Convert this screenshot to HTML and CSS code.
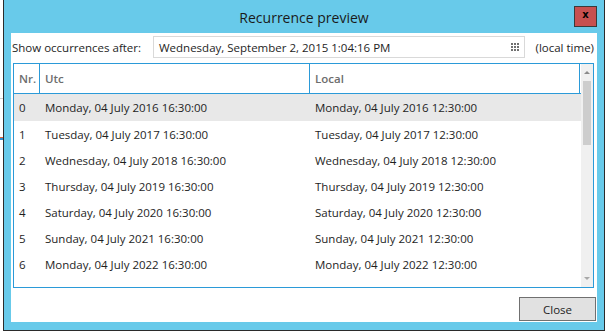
FILE: index.html
```html
<!DOCTYPE html>
<html lang="en">
<head>
  <meta charset="UTF-8">
  <title>Recurrence preview</title>
  <link rel="stylesheet" href="styles.css">
</head>
<body>

<div class="desktop">
  <div class="bg-line bg-line-gray"></div>
  <div class="bg-line bg-line-red"></div>
  <div class="bg-line bg-line-blue"></div>

  <div class="window">
    <div class="titlebar">
      <span class="title">Recurrence preview</span>
      <button type="button" class="close-x">x</button>
    </div>

    <div class="client">
      <div class="filter-row">
        <label class="filter-label" for="afterDate">Show occurrences after:</label>
        <div class="date-box" id="afterDate">
          <span class="date-text">Wednesday, September 2, 2015 1:04:16 PM</span>
          <span class="date-icon">
            <i></i><i></i><i></i><i></i><i></i><i></i><i></i><i></i><i></i>
          </span>
        </div>
        <span class="local-note">(local time)</span>
      </div>

      <div class="grid">
        <div class="grid-main">
          <div class="grid-head">
            <div class="cell col-nr">Nr.</div>
            <div class="cell col-date">Utc</div>
            <div class="cell col-date">Local</div>
          </div>
          <div class="grid-body">
            <div class="grid-row selected">
              <div class="cell col-nr">0</div>
              <div class="cell col-date">Monday, 04 July 2016 16:30:00</div>
              <div class="cell col-date">Monday, 04 July 2016 12:30:00</div>
            </div>
            <div class="grid-row">
              <div class="cell col-nr">1</div>
              <div class="cell col-date">Tuesday, 04 July 2017 16:30:00</div>
              <div class="cell col-date">Tuesday, 04 July 2017 12:30:00</div>
            </div>
            <div class="grid-row">
              <div class="cell col-nr">2</div>
              <div class="cell col-date">Wednesday, 04 July 2018 16:30:00</div>
              <div class="cell col-date">Wednesday, 04 July 2018 12:30:00</div>
            </div>
            <div class="grid-row">
              <div class="cell col-nr">3</div>
              <div class="cell col-date">Thursday, 04 July 2019 16:30:00</div>
              <div class="cell col-date">Thursday, 04 July 2019 12:30:00</div>
            </div>
            <div class="grid-row">
              <div class="cell col-nr">4</div>
              <div class="cell col-date">Saturday, 04 July 2020 16:30:00</div>
              <div class="cell col-date">Saturday, 04 July 2020 12:30:00</div>
            </div>
            <div class="grid-row">
              <div class="cell col-nr">5</div>
              <div class="cell col-date">Sunday, 04 July 2021 16:30:00</div>
              <div class="cell col-date">Sunday, 04 July 2021 12:30:00</div>
            </div>
            <div class="grid-row">
              <div class="cell col-nr">6</div>
              <div class="cell col-date">Monday, 04 July 2022 16:30:00</div>
              <div class="cell col-date">Monday, 04 July 2022 12:30:00</div>
            </div>
          </div>
        </div>
        <div class="scrollbar">
          <div class="scroll-btn"><span class="arrow-up"></span></div>
          <div class="scroll-thumb"></div>
          <div class="scroll-track"></div>
          <div class="scroll-btn"><span class="arrow-down"></span></div>
        </div>
      </div>

      <div class="button-row">
        <button type="button" class="close-button">Close</button>
      </div>
    </div>
  </div>
</div>

</body>
</html>
```
FILE: styles.css
```css
body {
  margin: 0;
  background-color: #ffffff;
  font-family: "Open Sans", "Noto Sans", sans-serif;
  font-size: 11.5px;
  color: #1e1e1e;
}

.desktop {
  position: relative;
  width: 606px;
  height: 333px;
  overflow: hidden;
  padding-left: 3px;
  box-sizing: border-box;
}

/* bits of the windows behind the dialog */
.bg-line {
  position: absolute;
  left: 0;
  width: 3px;
}
.bg-line-gray {
  top: 98px;
  height: 1px;
  background-color: #cfcfcf;
}
.bg-line-red {
  top: 137px;
  height: 1px;
  background-color: #e0603a;
}
.bg-line-blue {
  top: 138px;
  height: 2px;
  background-color: #2a8fd0;
}

.window {
  position: relative;
  width: 602px;
  height: 331px;
  box-sizing: border-box;
  border: 1px solid #2b2b2b;
  border-top: none;
  background-color: #68caea;
  display: flex;
  flex-direction: column;
}

.titlebar {
  height: 33px;
  flex: none;
  display: flex;
  align-items: center;
  justify-content: center;
}

.title {
  font-size: 14px;
  color: #1a1a1a;
  margin-top: 1px;
}

.close-x {
  position: absolute;
  top: 6px;
  right: 7px;
  width: 23px;
  height: 21px;
  padding: 0 0 3px;
  border: 1px solid #3a3a3a;
  background-color: #c75050;
  color: #000000;
  font-family: "DejaVu Sans", sans-serif;
  font-size: 10px;
  font-weight: bold;
  line-height: 1;
}

.client {
  flex: 1;
  margin: 0 7px 8px;
  background-color: #ffffff;
  padding: 3px 3px 0 1px;
  display: flex;
  flex-direction: column;
}

.filter-row {
  display: flex;
  align-items: center;
  height: 22px;
}

.filter-label {
  width: 141px;
  flex: none;
}

.date-box {
  flex: 1;
  height: 22px;
  box-sizing: border-box;
  border: 1px solid #d9d9d9;
  display: flex;
  align-items: center;
  justify-content: space-between;
  padding: 0 5px;
}

.date-icon {
  display: grid;
  grid-template-columns: repeat(3, 2px);
  grid-auto-rows: 2px;
  gap: 1px;
}

.date-icon i {
  background-color: #707070;
}

.local-note {
  margin-left: 11px;
  flex: none;
}

.grid {
  margin: 5px 0 0 1px;
  height: 225px;
  box-sizing: border-box;
  border: 1px solid #2b9ad8;
  display: flex;
}

.grid-main {
  flex: 1;
}

.grid-head {
  display: flex;
  height: 30px;
  box-sizing: border-box;
  border-bottom: 1px solid #2b9ad8;
  color: #6d6d6d;
  font-weight: 600;
}

.grid-head .cell {
  border-right: 1px solid #2b9ad8;
  display: flex;
  align-items: center;
}

.cell {
  box-sizing: border-box;
  padding-left: 5px;
  white-space: nowrap;
}

.col-nr {
  width: 26px;
}

.col-date {
  width: 270px;
}

.grid-row {
  display: flex;
  align-items: center;
  height: 26px;
}

.grid-row.selected {
  height: 27px;
  background-color: #e8e8e8;
}

.scrollbar {
  width: 12px;
  flex: none;
  background-color: #f0f0f0;
  display: flex;
  flex-direction: column;
}

.scroll-btn {
  height: 17px;
  display: flex;
  align-items: center;
  justify-content: center;
}

.arrow-up,
.arrow-down {
  width: 0;
  height: 0;
  border-left: 3px solid transparent;
  border-right: 3px solid transparent;
}

.arrow-up {
  border-bottom: 3px solid #8a8a8a;
}

.arrow-down {
  border-top: 3px solid #a8a8a8;
}

.scroll-thumb {
  height: 64px;
  margin: 0 2px;
  background-color: #cdcdcd;
}

.scroll-track {
  flex: 1;
}

.button-row {
  display: flex;
  justify-content: flex-end;
  margin: 9px -2px 0 0;
}

.close-button {
  width: 77px;
  height: 24px;
  border: 1px solid #707070;
  background-color: #e1e1e1;
  font-family: inherit;
  font-size: 11.5px;
  color: #1e1e1e;
  padding: 0;
}
```
